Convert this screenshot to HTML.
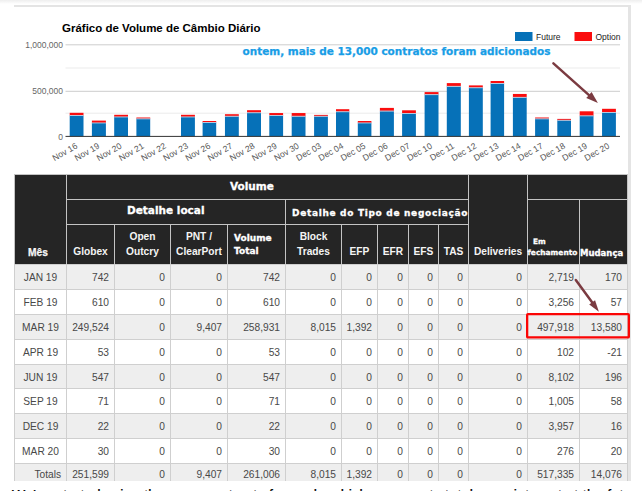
<!DOCTYPE html>
<html lang="pt"><head><meta charset="utf-8"><title>Gráfico de Volume de Câmbio Diário</title>
<style>
html,body{margin:0;padding:0;background:#fff;}
body{width:642px;height:491px;overflow:hidden;position:relative;font-family:"Liberation Sans", sans-serif;}
.top{position:absolute;left:0;top:0;width:642px;height:4px;background:linear-gradient(#eeeeee,#ffffff);}
.hl{position:absolute;left:14px;top:5px;width:617px;height:2px;background:#e4e4e4;}
.vl{position:absolute;left:628px;top:5px;width:3px;height:476px;background:#e4e4e4;}
.chart{position:absolute;left:0;top:0;}
.tbl{position:absolute;left:0;top:0;width:642px;height:481px;overflow:hidden;}
.c{position:absolute;box-sizing:border-box;border:1px solid #cfcfcf;}
.h{background:#252525;color:#fff;border-color:#c4c4c4;}
.hv{-webkit-text-stroke:0.3px #fff;position:absolute;font-family:"DejaVu Sans", "Liberation Sans", sans-serif;font-weight:bold;white-space:nowrap;color:#fff;}
.ab{position:absolute;text-align:center;font-weight:bold;font-size:10.2px;line-height:15px;color:#f4f4f4;}
.d{font-size:10.2px;line-height:25px;text-align:right;padding-right:5px;color:#484848;}
.d.t{line-height:21px;}
.d.m{text-align:center;padding-right:0;}
.g{background:#eee;}
.w{background:#fff;}
.box{position:absolute;left:526px;top:313px;width:104px;height:25px;box-sizing:border-box;border:2px solid #f00;}
.arr{position:absolute;left:0;top:0;}
.foot{-webkit-text-stroke:0.25px #000;position:absolute;left:12px;top:487px;font-size:14px;line-height:16px;color:#000;white-space:nowrap;letter-spacing:0.3px;}
</style></head><body>
<div class="top"></div><div class="hl"></div><div class="vl"></div>
<svg class="chart" width="642" height="175" viewBox="0 0 642 175">
<rect x="65.5" y="44.3" width="554.5" height="1" fill="#cdcdcd"/>
<rect x="65.5" y="67.5" width="554.5" height="1" fill="#ebebeb"/>
<rect x="65.5" y="90.8" width="554.5" height="1" fill="#cdcdcd"/>
<rect x="65.5" y="112.7" width="554.5" height="1" fill="#ebebeb"/>
<rect x="69.70" y="115.6" width="13.8" height="20.80" fill="#0671b8"/>
<rect x="69.70" y="112.8" width="13.8" height="2.80" fill="#fa0d0e"/>
<rect x="69.70" y="115.10" width="13.8" height="0.9" fill="#b4d5ec"/>
<rect x="91.90" y="123.0" width="14.0" height="13.40" fill="#0671b8"/>
<rect x="91.90" y="120.6" width="14.0" height="2.40" fill="#fa0d0e"/>
<rect x="91.90" y="122.50" width="14.0" height="0.9" fill="#b4d5ec"/>
<rect x="114.20" y="117.0" width="13.8" height="19.40" fill="#0671b8"/>
<rect x="114.20" y="114.8" width="13.8" height="2.20" fill="#fa0d0e"/>
<rect x="114.20" y="116.50" width="13.8" height="0.9" fill="#b4d5ec"/>
<rect x="136.40" y="118.9" width="13.8" height="17.50" fill="#0671b8"/>
<rect x="136.40" y="117.5" width="13.8" height="1.40" fill="#fa0d0e"/>
<rect x="136.40" y="118.40" width="13.8" height="0.9" fill="#b4d5ec"/>
<rect x="181.00" y="117.0" width="13.9" height="19.40" fill="#0671b8"/>
<rect x="181.00" y="114.8" width="13.9" height="2.20" fill="#fa0d0e"/>
<rect x="181.00" y="116.50" width="13.9" height="0.9" fill="#b4d5ec"/>
<rect x="202.60" y="122.5" width="13.6" height="13.90" fill="#0671b8"/>
<rect x="202.60" y="121.0" width="13.6" height="1.50" fill="#fa0d0e"/>
<rect x="202.60" y="122.00" width="13.6" height="0.9" fill="#b4d5ec"/>
<rect x="224.95" y="116.3" width="13.85" height="20.10" fill="#0671b8"/>
<rect x="224.95" y="114.2" width="13.85" height="2.10" fill="#fa0d0e"/>
<rect x="224.95" y="115.80" width="13.85" height="0.9" fill="#b4d5ec"/>
<rect x="247.05" y="112.8" width="13.95" height="23.60" fill="#0671b8"/>
<rect x="247.05" y="110.2" width="13.95" height="2.60" fill="#fa0d0e"/>
<rect x="247.05" y="112.30" width="13.95" height="0.9" fill="#b4d5ec"/>
<rect x="269.30" y="115.6" width="13.8" height="20.80" fill="#0671b8"/>
<rect x="269.30" y="113.05" width="13.8" height="2.55" fill="#fa0d0e"/>
<rect x="269.30" y="115.10" width="13.8" height="0.9" fill="#b4d5ec"/>
<rect x="291.70" y="116.3" width="13.8" height="20.10" fill="#0671b8"/>
<rect x="291.70" y="113.05" width="13.8" height="3.25" fill="#fa0d0e"/>
<rect x="291.70" y="115.80" width="13.8" height="0.9" fill="#b4d5ec"/>
<rect x="314.10" y="116.3" width="13.8" height="20.10" fill="#0671b8"/>
<rect x="314.10" y="114.9" width="13.8" height="1.40" fill="#fa0d0e"/>
<rect x="314.10" y="115.80" width="13.8" height="0.9" fill="#b4d5ec"/>
<rect x="336.00" y="111.8" width="13.3" height="24.60" fill="#0671b8"/>
<rect x="336.00" y="109.2" width="13.3" height="2.60" fill="#fa0d0e"/>
<rect x="336.00" y="111.30" width="13.3" height="0.9" fill="#b4d5ec"/>
<rect x="357.80" y="123.0" width="13.6" height="13.40" fill="#0671b8"/>
<rect x="357.80" y="121.0" width="13.6" height="2.00" fill="#fa0d0e"/>
<rect x="357.80" y="122.50" width="13.6" height="0.9" fill="#b4d5ec"/>
<rect x="379.90" y="111.1" width="14.0" height="25.30" fill="#0671b8"/>
<rect x="379.90" y="107.9" width="14.0" height="3.20" fill="#fa0d0e"/>
<rect x="379.90" y="110.60" width="14.0" height="0.9" fill="#b4d5ec"/>
<rect x="402.10" y="113.5" width="13.8" height="22.90" fill="#0671b8"/>
<rect x="402.10" y="110.3" width="13.8" height="3.20" fill="#fa0d0e"/>
<rect x="402.10" y="113.00" width="13.8" height="0.9" fill="#b4d5ec"/>
<rect x="424.60" y="94.7" width="13.9" height="41.70" fill="#0671b8"/>
<rect x="424.60" y="92.1" width="13.9" height="2.60" fill="#fa0d0e"/>
<rect x="424.60" y="94.20" width="13.9" height="0.9" fill="#b4d5ec"/>
<rect x="446.80" y="86.4" width="14.0" height="50.00" fill="#0671b8"/>
<rect x="446.80" y="83.1" width="14.0" height="3.30" fill="#fa0d0e"/>
<rect x="446.80" y="85.90" width="14.0" height="0.9" fill="#b4d5ec"/>
<rect x="468.90" y="87.8" width="13.9" height="48.60" fill="#0671b8"/>
<rect x="468.90" y="85.4" width="13.9" height="2.40" fill="#fa0d0e"/>
<rect x="468.90" y="87.30" width="13.9" height="0.9" fill="#b4d5ec"/>
<rect x="490.60" y="83.5" width="13.5" height="52.90" fill="#0671b8"/>
<rect x="490.60" y="81.0" width="13.5" height="2.50" fill="#fa0d0e"/>
<rect x="490.60" y="83.00" width="13.5" height="0.9" fill="#b4d5ec"/>
<rect x="512.90" y="97.4" width="13.8" height="39.00" fill="#0671b8"/>
<rect x="512.90" y="93.95" width="13.8" height="3.45" fill="#fa0d0e"/>
<rect x="512.90" y="96.90" width="13.8" height="0.9" fill="#b4d5ec"/>
<rect x="535.10" y="118.9" width="13.8" height="17.50" fill="#0671b8"/>
<rect x="535.10" y="117.5" width="13.8" height="1.40" fill="#fa0d0e"/>
<rect x="535.10" y="118.40" width="13.8" height="0.9" fill="#b4d5ec"/>
<rect x="557.30" y="120.3" width="13.7" height="16.10" fill="#0671b8"/>
<rect x="557.30" y="118.9" width="13.7" height="1.40" fill="#fa0d0e"/>
<rect x="557.30" y="119.80" width="13.7" height="0.9" fill="#b4d5ec"/>
<rect x="579.70" y="115.9" width="13.8" height="20.50" fill="#0671b8"/>
<rect x="579.70" y="111.3" width="13.8" height="4.60" fill="#fa0d0e"/>
<rect x="579.70" y="115.40" width="13.8" height="0.9" fill="#b4d5ec"/>
<rect x="602.06" y="112.5" width="13.84" height="23.90" fill="#0671b8"/>
<rect x="602.06" y="108.8" width="13.84" height="3.70" fill="#fa0d0e"/>
<rect x="602.06" y="112.00" width="13.84" height="0.9" fill="#b4d5ec"/>
<rect x="65.5" y="135.9" width="554.5" height="1" fill="#333"/>
<text x="63" y="48.1" text-anchor="end" font-size="8.5" fill="#666" font-family='"Liberation Sans", sans-serif'>1,000,000</text>
<text x="63" y="94.2" text-anchor="end" font-size="8.5" fill="#666" font-family='"Liberation Sans", sans-serif'>500,000</text>
<text x="63" y="139.7" text-anchor="end" font-size="8.5" fill="#666" font-family='"Liberation Sans", sans-serif'>0</text>
<text transform="translate(78.05,147.6) rotate(-30)" text-anchor="end" font-size="8.6" fill="#555" font-family='"Liberation Sans", sans-serif'>Nov 16</text>
<text transform="translate(100.22,147.6) rotate(-30)" text-anchor="end" font-size="8.6" fill="#555" font-family='"Liberation Sans", sans-serif'>Nov 19</text>
<text transform="translate(122.39,147.6) rotate(-30)" text-anchor="end" font-size="8.6" fill="#555" font-family='"Liberation Sans", sans-serif'>Nov 20</text>
<text transform="translate(144.56,147.6) rotate(-30)" text-anchor="end" font-size="8.6" fill="#555" font-family='"Liberation Sans", sans-serif'>Nov 21</text>
<text transform="translate(166.73,147.6) rotate(-30)" text-anchor="end" font-size="8.6" fill="#555" font-family='"Liberation Sans", sans-serif'>Nov 22</text>
<text transform="translate(188.90,147.6) rotate(-30)" text-anchor="end" font-size="8.6" fill="#555" font-family='"Liberation Sans", sans-serif'>Nov 23</text>
<text transform="translate(211.07,147.6) rotate(-30)" text-anchor="end" font-size="8.6" fill="#555" font-family='"Liberation Sans", sans-serif'>Nov 26</text>
<text transform="translate(233.24,147.6) rotate(-30)" text-anchor="end" font-size="8.6" fill="#555" font-family='"Liberation Sans", sans-serif'>Nov 27</text>
<text transform="translate(255.41,147.6) rotate(-30)" text-anchor="end" font-size="8.6" fill="#555" font-family='"Liberation Sans", sans-serif'>Nov 28</text>
<text transform="translate(277.58,147.6) rotate(-30)" text-anchor="end" font-size="8.6" fill="#555" font-family='"Liberation Sans", sans-serif'>Nov 29</text>
<text transform="translate(299.75,147.6) rotate(-30)" text-anchor="end" font-size="8.6" fill="#555" font-family='"Liberation Sans", sans-serif'>Nov 30</text>
<text transform="translate(321.92,147.6) rotate(-30)" text-anchor="end" font-size="8.6" fill="#555" font-family='"Liberation Sans", sans-serif'>Dec 03</text>
<text transform="translate(344.09,147.6) rotate(-30)" text-anchor="end" font-size="8.6" fill="#555" font-family='"Liberation Sans", sans-serif'>Dec 04</text>
<text transform="translate(366.26,147.6) rotate(-30)" text-anchor="end" font-size="8.6" fill="#555" font-family='"Liberation Sans", sans-serif'>Dec 05</text>
<text transform="translate(388.43,147.6) rotate(-30)" text-anchor="end" font-size="8.6" fill="#555" font-family='"Liberation Sans", sans-serif'>Dec 06</text>
<text transform="translate(410.60,147.6) rotate(-30)" text-anchor="end" font-size="8.6" fill="#555" font-family='"Liberation Sans", sans-serif'>Dec 07</text>
<text transform="translate(432.77,147.6) rotate(-30)" text-anchor="end" font-size="8.6" fill="#555" font-family='"Liberation Sans", sans-serif'>Dec 10</text>
<text transform="translate(454.94,147.6) rotate(-30)" text-anchor="end" font-size="8.6" fill="#555" font-family='"Liberation Sans", sans-serif'>Dec 11</text>
<text transform="translate(477.11,147.6) rotate(-30)" text-anchor="end" font-size="8.6" fill="#555" font-family='"Liberation Sans", sans-serif'>Dec 12</text>
<text transform="translate(499.28,147.6) rotate(-30)" text-anchor="end" font-size="8.6" fill="#555" font-family='"Liberation Sans", sans-serif'>Dec 13</text>
<text transform="translate(521.45,147.6) rotate(-30)" text-anchor="end" font-size="8.6" fill="#555" font-family='"Liberation Sans", sans-serif'>Dec 14</text>
<text transform="translate(543.62,147.6) rotate(-30)" text-anchor="end" font-size="8.6" fill="#555" font-family='"Liberation Sans", sans-serif'>Dec 17</text>
<text transform="translate(565.79,147.6) rotate(-30)" text-anchor="end" font-size="8.6" fill="#555" font-family='"Liberation Sans", sans-serif'>Dec 18</text>
<text transform="translate(587.96,147.6) rotate(-30)" text-anchor="end" font-size="8.6" fill="#555" font-family='"Liberation Sans", sans-serif'>Dec 19</text>
<text transform="translate(610.13,147.6) rotate(-30)" text-anchor="end" font-size="8.6" fill="#555" font-family='"Liberation Sans", sans-serif'>Dec 20</text>
<text x="62" y="32" font-size="11.5" font-weight="bold" fill="#000" font-family='"Liberation Sans", sans-serif'>Gráfico de Volume de Câmbio Diário</text>
<rect x="515" y="32" width="17.5" height="9" fill="#0671b8"/>
<text x="536" y="40" font-size="8.5" fill="#222" font-family='"Liberation Sans", sans-serif'>Future</text>
<rect x="574.5" y="32" width="17.5" height="9" fill="#fa0d0e"/>
<text x="595.5" y="40" font-size="8.5" fill="#222" font-family='"Liberation Sans", sans-serif'>Option</text>
<text x="242.5" y="54.8" font-size="9.6" font-weight="bold" fill="#189de6" stroke="#189de6" stroke-width="0.25" font-family='"DejaVu Sans", "Liberation Sans", sans-serif' textLength="308" lengthAdjust="spacingAndGlyphs">ontem, mais de 13,000 contratos foram adicionados</text>
<line x1="553.40" y1="63.40" x2="589.83" y2="95.82" stroke="#7b3b41" stroke-width="2.5" stroke-linecap="round"/><polygon points="597.90,103.00 586.28,98.01 591.59,92.03" fill="#7b3b41"/>
</svg>
<div class="tbl">
<div class="c h" style="left:14px;top:174px;width:53px;height:91px"><span class="ab" style="left:0;width:46px;bottom:4px;-webkit-text-stroke:0.25px #fff">Mês</span></div>
<div class="c h" style="left:66px;top:174px;width:403px;height:26px"><span class="hv" style="left:163px;top:5px;font-size:10.5px">Volume</span></div>
<div class="c h" style="left:66px;top:199px;width:220px;height:26px"><span class="hv" style="left:60px;top:4px;font-size:10.5px">Detalhe local</span></div>
<div class="c h" style="left:285px;top:199px;width:184px;height:26px"><span class="hv" style="left:6px;top:8px;font-size:9px;letter-spacing:0.68px">Detalhe do Tipo de negociação</span></div>
<div class="c h" style="left:468px;top:174px;width:60px;height:91px"><span class="ab" style="left:0;right:0;bottom:5px">Deliveries</span></div>
<div class="c h" style="left:527px;top:174px;width:101px;height:26px"></div>
<div class="c h" style="left:527px;top:199px;width:53px;height:66px"><span class="hv" style="left:5px;top:36.8px;font-size:7.4px;line-height:10.8px">Em<br><span style="margin-left:-5.4px;letter-spacing:0.03px">fechamento</span></span></div>
<div class="c h" style="left:579px;top:199px;width:49px;height:66px"><span class="hv" style="left:0px;top:47.7px;font-size:8.5px">Mudança</span></div>
<div class="c h" style="left:66px;top:224px;width:49px;height:41px"><span class="ab" style="left:0;right:0;bottom:5px">Globex</span></div>
<div class="c h" style="left:114px;top:224px;width:57px;height:41px"><span class="ab" style="left:0;right:0;bottom:5px">Open<br>Outcry</span></div>
<div class="c h" style="left:170px;top:224px;width:58px;height:41px"><span class="ab" style="left:0;right:0;bottom:5px">PNT /<br>ClearPort</span></div>
<div class="c h" style="left:227px;top:224px;width:59px;height:41px"><span class="hv" style="left:6px;top:7px;font-size:9px;line-height:13px">Volume<br>Total</span></div>
<div class="c h" style="left:285px;top:224px;width:57px;height:41px"><span class="ab" style="left:0;right:0;bottom:5px">Block<br>Trades</span></div>
<div class="c h" style="left:341px;top:224px;width:37px;height:41px"><span class="ab" style="left:0;right:0;bottom:5px">EFP</span></div>
<div class="c h" style="left:377px;top:224px;width:32px;height:41px"><span class="ab" style="left:0;right:0;bottom:5px">EFR</span></div>
<div class="c h" style="left:408px;top:224px;width:31px;height:41px"><span class="ab" style="left:0;right:0;bottom:5px">EFS</span></div>
<div class="c h" style="left:438px;top:224px;width:31px;height:41px"><span class="ab" style="left:0;right:0;bottom:5px">TAS</span></div>
<div class="c d g m" style="left:14px;top:264px;width:53px;height:26px">JAN 19</div>
<div class="c d g" style="left:66px;top:264px;width:49px;height:26px">742</div>
<div class="c d g" style="left:114px;top:264px;width:57px;height:26px">0</div>
<div class="c d g" style="left:170px;top:264px;width:58px;height:26px">0</div>
<div class="c d g" style="left:227px;top:264px;width:59px;height:26px">742</div>
<div class="c d g" style="left:285px;top:264px;width:57px;height:26px">0</div>
<div class="c d g" style="left:341px;top:264px;width:37px;height:26px">0</div>
<div class="c d g" style="left:377px;top:264px;width:32px;height:26px">0</div>
<div class="c d g" style="left:408px;top:264px;width:31px;height:26px">0</div>
<div class="c d g" style="left:438px;top:264px;width:31px;height:26px">0</div>
<div class="c d g" style="left:468px;top:264px;width:60px;height:26px">0</div>
<div class="c d g" style="left:527px;top:264px;width:53px;height:26px">2,719</div>
<div class="c d g" style="left:579px;top:264px;width:49px;height:26px">170</div>
<div class="c d w m" style="left:14px;top:289px;width:53px;height:26px">FEB 19</div>
<div class="c d w" style="left:66px;top:289px;width:49px;height:26px">610</div>
<div class="c d w" style="left:114px;top:289px;width:57px;height:26px">0</div>
<div class="c d w" style="left:170px;top:289px;width:58px;height:26px">0</div>
<div class="c d w" style="left:227px;top:289px;width:59px;height:26px">610</div>
<div class="c d w" style="left:285px;top:289px;width:57px;height:26px">0</div>
<div class="c d w" style="left:341px;top:289px;width:37px;height:26px">0</div>
<div class="c d w" style="left:377px;top:289px;width:32px;height:26px">0</div>
<div class="c d w" style="left:408px;top:289px;width:31px;height:26px">0</div>
<div class="c d w" style="left:438px;top:289px;width:31px;height:26px">0</div>
<div class="c d w" style="left:468px;top:289px;width:60px;height:26px">0</div>
<div class="c d w" style="left:527px;top:289px;width:53px;height:26px">3,256</div>
<div class="c d w" style="left:579px;top:289px;width:49px;height:26px">57</div>
<div class="c d g m" style="left:14px;top:314px;width:53px;height:26px">MAR 19</div>
<div class="c d g" style="left:66px;top:314px;width:49px;height:26px">249,524</div>
<div class="c d g" style="left:114px;top:314px;width:57px;height:26px">0</div>
<div class="c d g" style="left:170px;top:314px;width:58px;height:26px">9,407</div>
<div class="c d g" style="left:227px;top:314px;width:59px;height:26px">258,931</div>
<div class="c d g" style="left:285px;top:314px;width:57px;height:26px">8,015</div>
<div class="c d g" style="left:341px;top:314px;width:37px;height:26px">1,392</div>
<div class="c d g" style="left:377px;top:314px;width:32px;height:26px">0</div>
<div class="c d g" style="left:408px;top:314px;width:31px;height:26px">0</div>
<div class="c d g" style="left:438px;top:314px;width:31px;height:26px">0</div>
<div class="c d g" style="left:468px;top:314px;width:60px;height:26px">0</div>
<div class="c d g" style="left:527px;top:314px;width:53px;height:26px">497,918</div>
<div class="c d g" style="left:579px;top:314px;width:49px;height:26px">13,580</div>
<div class="c d w m" style="left:14px;top:339px;width:53px;height:26px">APR 19</div>
<div class="c d w" style="left:66px;top:339px;width:49px;height:26px">53</div>
<div class="c d w" style="left:114px;top:339px;width:57px;height:26px">0</div>
<div class="c d w" style="left:170px;top:339px;width:58px;height:26px">0</div>
<div class="c d w" style="left:227px;top:339px;width:59px;height:26px">53</div>
<div class="c d w" style="left:285px;top:339px;width:57px;height:26px">0</div>
<div class="c d w" style="left:341px;top:339px;width:37px;height:26px">0</div>
<div class="c d w" style="left:377px;top:339px;width:32px;height:26px">0</div>
<div class="c d w" style="left:408px;top:339px;width:31px;height:26px">0</div>
<div class="c d w" style="left:438px;top:339px;width:31px;height:26px">0</div>
<div class="c d w" style="left:468px;top:339px;width:60px;height:26px">0</div>
<div class="c d w" style="left:527px;top:339px;width:53px;height:26px">102</div>
<div class="c d w" style="left:579px;top:339px;width:49px;height:26px">-21</div>
<div class="c d g m" style="left:14px;top:364px;width:53px;height:25px">JUN 19</div>
<div class="c d g" style="left:66px;top:364px;width:49px;height:25px">547</div>
<div class="c d g" style="left:114px;top:364px;width:57px;height:25px">0</div>
<div class="c d g" style="left:170px;top:364px;width:58px;height:25px">0</div>
<div class="c d g" style="left:227px;top:364px;width:59px;height:25px">547</div>
<div class="c d g" style="left:285px;top:364px;width:57px;height:25px">0</div>
<div class="c d g" style="left:341px;top:364px;width:37px;height:25px">0</div>
<div class="c d g" style="left:377px;top:364px;width:32px;height:25px">0</div>
<div class="c d g" style="left:408px;top:364px;width:31px;height:25px">0</div>
<div class="c d g" style="left:438px;top:364px;width:31px;height:25px">0</div>
<div class="c d g" style="left:468px;top:364px;width:60px;height:25px">0</div>
<div class="c d g" style="left:527px;top:364px;width:53px;height:25px">8,102</div>
<div class="c d g" style="left:579px;top:364px;width:49px;height:25px">196</div>
<div class="c d w m" style="left:14px;top:388px;width:53px;height:26px">SEP 19</div>
<div class="c d w" style="left:66px;top:388px;width:49px;height:26px">71</div>
<div class="c d w" style="left:114px;top:388px;width:57px;height:26px">0</div>
<div class="c d w" style="left:170px;top:388px;width:58px;height:26px">0</div>
<div class="c d w" style="left:227px;top:388px;width:59px;height:26px">71</div>
<div class="c d w" style="left:285px;top:388px;width:57px;height:26px">0</div>
<div class="c d w" style="left:341px;top:388px;width:37px;height:26px">0</div>
<div class="c d w" style="left:377px;top:388px;width:32px;height:26px">0</div>
<div class="c d w" style="left:408px;top:388px;width:31px;height:26px">0</div>
<div class="c d w" style="left:438px;top:388px;width:31px;height:26px">0</div>
<div class="c d w" style="left:468px;top:388px;width:60px;height:26px">0</div>
<div class="c d w" style="left:527px;top:388px;width:53px;height:26px">1,005</div>
<div class="c d w" style="left:579px;top:388px;width:49px;height:26px">58</div>
<div class="c d g m" style="left:14px;top:413px;width:53px;height:26px">DEC 19</div>
<div class="c d g" style="left:66px;top:413px;width:49px;height:26px">22</div>
<div class="c d g" style="left:114px;top:413px;width:57px;height:26px">0</div>
<div class="c d g" style="left:170px;top:413px;width:58px;height:26px">0</div>
<div class="c d g" style="left:227px;top:413px;width:59px;height:26px">22</div>
<div class="c d g" style="left:285px;top:413px;width:57px;height:26px">0</div>
<div class="c d g" style="left:341px;top:413px;width:37px;height:26px">0</div>
<div class="c d g" style="left:377px;top:413px;width:32px;height:26px">0</div>
<div class="c d g" style="left:408px;top:413px;width:31px;height:26px">0</div>
<div class="c d g" style="left:438px;top:413px;width:31px;height:26px">0</div>
<div class="c d g" style="left:468px;top:413px;width:60px;height:26px">0</div>
<div class="c d g" style="left:527px;top:413px;width:53px;height:26px">3,957</div>
<div class="c d g" style="left:579px;top:413px;width:49px;height:26px">16</div>
<div class="c d w m" style="left:14px;top:438px;width:53px;height:26px">MAR 20</div>
<div class="c d w" style="left:66px;top:438px;width:49px;height:26px">30</div>
<div class="c d w" style="left:114px;top:438px;width:57px;height:26px">0</div>
<div class="c d w" style="left:170px;top:438px;width:58px;height:26px">0</div>
<div class="c d w" style="left:227px;top:438px;width:59px;height:26px">30</div>
<div class="c d w" style="left:285px;top:438px;width:57px;height:26px">0</div>
<div class="c d w" style="left:341px;top:438px;width:37px;height:26px">0</div>
<div class="c d w" style="left:377px;top:438px;width:32px;height:26px">0</div>
<div class="c d w" style="left:408px;top:438px;width:31px;height:26px">0</div>
<div class="c d w" style="left:438px;top:438px;width:31px;height:26px">0</div>
<div class="c d w" style="left:468px;top:438px;width:60px;height:26px">0</div>
<div class="c d w" style="left:527px;top:438px;width:53px;height:26px">276</div>
<div class="c d w" style="left:579px;top:438px;width:49px;height:26px">20</div>
<div class="c d g t" style="left:14px;top:463px;width:53px;height:26px">Totals</div>
<div class="c d g t" style="left:66px;top:463px;width:49px;height:26px">251,599</div>
<div class="c d g t" style="left:114px;top:463px;width:57px;height:26px">0</div>
<div class="c d g t" style="left:170px;top:463px;width:58px;height:26px">9,407</div>
<div class="c d g t" style="left:227px;top:463px;width:59px;height:26px">261,006</div>
<div class="c d g t" style="left:285px;top:463px;width:57px;height:26px">8,015</div>
<div class="c d g t" style="left:341px;top:463px;width:37px;height:26px">1,392</div>
<div class="c d g t" style="left:377px;top:463px;width:32px;height:26px">0</div>
<div class="c d g t" style="left:408px;top:463px;width:31px;height:26px">0</div>
<div class="c d g t" style="left:438px;top:463px;width:31px;height:26px">0</div>
<div class="c d g t" style="left:468px;top:463px;width:60px;height:26px">0</div>
<div class="c d g t" style="left:527px;top:463px;width:53px;height:26px">517,335</div>
<div class="c d g t" style="left:579px;top:463px;width:49px;height:26px">14,076</div>
</div>
<svg class="arr" width="642" height="491" viewBox="0 0 642 491"><rect x="527.15" y="314.15" width="101.7" height="23.3" rx="0.8" fill="none" stroke="#fb0505" stroke-width="2.3"/><line x1="575.80" y1="280.00" x2="592.80" y2="303.34" stroke="#7b3b41" stroke-width="2.5" stroke-linecap="round"/><polygon points="598.90,311.70 589.22,304.53 595.04,300.29" fill="#7b3b41"/></svg>
<div class="foot">We&#39;ve started using the open contracts for each, which represents total open interest at the futures</div>
</body></html>
